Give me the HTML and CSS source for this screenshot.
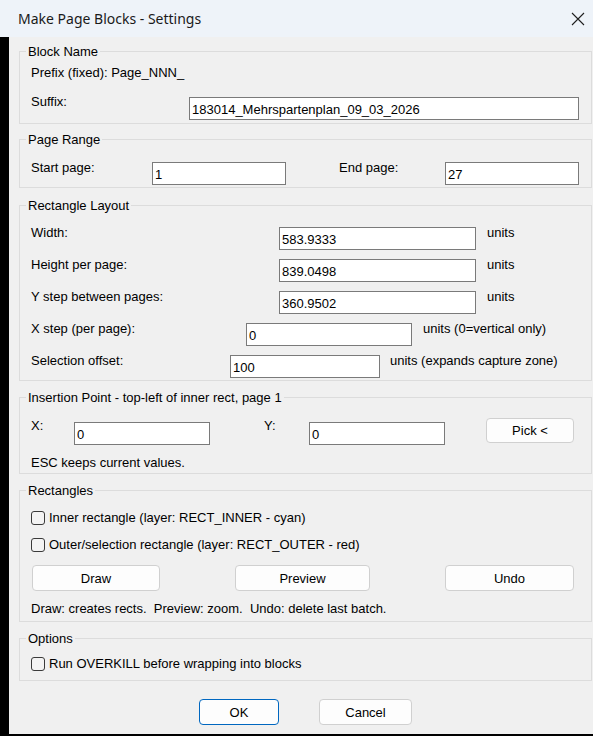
FILE: index.html
```html
<!DOCTYPE html>
<html>
<head>
<meta charset="utf-8">
<title>Make Page Blocks - Settings</title>
<link rel="stylesheet" href="styles.css">
</head>
<body>
<div class="window">
  <div class="titlebar">
    <span class="title">Make Page Blocks - Settings</span>
    <svg class="close" width="14" height="14" viewBox="0 0 14 14"><path d="M1 1 L13 13 M13 1 L1 13" stroke="#1f1f1f" stroke-width="1.1" fill="none"/></svg>
  </div>
  <div class="main">
    <div class="frame-left"></div>
    <div class="content">
      <fieldset class="gb gb-name">
        <legend>Block Name</legend>
        <div class="gb-body">
          <div class="text prefix">Prefix (fixed): Page_NNN_</div>
          <div class="row row-suffix">
            <span class="lbl w-suffix">Suffix:</span>
            <input class="tb tb-suffix" type="text" value="183014_Mehrspartenplan_09_03_2026">
          </div>
        </div>
      </fieldset>

      <fieldset class="gb gb-range">
        <legend>Page Range</legend>
        <div class="gb-body">
          <div class="row row-range">
            <span class="lbl w-start">Start page:</span>
            <input class="tb tb-page" type="text" value="1">
            <span class="lbl w-end">End page:</span>
            <input class="tb tb-page" type="text" value="27">
          </div>
        </div>
      </fieldset>

      <fieldset class="gb gb-layout">
        <legend>Rectangle Layout</legend>
        <div class="gb-body layout-rows">
          <div class="row">
            <span class="lbl w-wide">Width:</span>
            <input class="tb tb-wide" type="text" value="583.9333">
            <span class="unit">units</span>
          </div>
          <div class="row">
            <span class="lbl w-wide">Height per page:</span>
            <input class="tb tb-wide" type="text" value="839.0498">
            <span class="unit">units</span>
          </div>
          <div class="row">
            <span class="lbl w-wide">Y step between pages:</span>
            <input class="tb tb-wide" type="text" value="360.9502">
            <span class="unit">units</span>
          </div>
          <div class="row">
            <span class="lbl w-xstep">X step (per page):</span>
            <input class="tb tb-xstep" type="text" value="0">
            <span class="unit">units (0=vertical only)</span>
          </div>
          <div class="row">
            <span class="lbl w-sel">Selection offset:</span>
            <input class="tb tb-sel" type="text" value="100">
            <span class="unit unit-sel">units (expands capture zone)</span>
          </div>
        </div>
      </fieldset>

      <fieldset class="gb gb-insert">
        <legend>Insertion Point - top-left of inner rect, page 1</legend>
        <div class="gb-body">
          <div class="row row-insert">
            <span class="lbl w-x">X:</span>
            <input class="tb tb-xy" type="text" value="0">
            <span class="lbl w-y">Y:</span>
            <input class="tb tb-xy" type="text" value="0">
            <button class="btn btn-pick" type="button">Pick &lt;</button>
          </div>
          <div class="text esc">ESC keeps current values.</div>
        </div>
      </fieldset>

      <fieldset class="gb gb-rects">
        <legend>Rectangles</legend>
        <div class="gb-body">
          <div class="check check-first"><span class="cb"></span><span>Inner rectangle (layer: RECT_INNER - cyan)</span></div>
          <div class="check check-next"><span class="cb"></span><span>Outer/selection rectangle (layer: RECT_OUTER - red)</span></div>
          <div class="row row-actions">
            <button class="btn btn-draw" type="button">Draw</button>
            <button class="btn btn-preview" type="button">Preview</button>
            <button class="btn btn-undo" type="button">Undo</button>
          </div>
          <div class="text hint">Draw: creates rects.&nbsp; Preview: zoom.&nbsp; Undo: delete last batch.</div>
        </div>
      </fieldset>

      <fieldset class="gb gb-options">
        <legend>Options</legend>
        <div class="gb-body">
          <div class="check check-opt"><span class="cb"></span><span>Run OVERKILL before wrapping into blocks</span></div>
        </div>
      </fieldset>

      <div class="dialog-buttons">
        <button class="btn btn-ok" type="button">OK</button>
        <button class="btn btn-cancel" type="button">Cancel</button>
      </div>
    </div>
  </div>
  <div class="frame-bottom"></div>
</div>
</body>
</html>
```

FILE: styles.css
```css
* { box-sizing: border-box; }

html, body {
  margin: 0;
  padding: 0;
  width: 593px;
  height: 736px;
  overflow: hidden;
  background: #f0f0f0;
}

.window {
  width: 593px;
  height: 736px;
  display: flex;
  flex-direction: column;
  font-family: "Liberation Sans", Arial, sans-serif;
  font-size: 13px;
  line-height: 15px;
  color: #000;
}

.titlebar {
  height: 37px;
  flex: none;
  background: #eef3f9;
  display: flex;
  align-items: center;
  justify-content: space-between;
  padding: 0 8px 0 18px;
}

.title {
  font-family: "Noto Sans", "Open Sans", sans-serif;
  font-size: 14px;
  color: #1a1a1a;
  line-height: 20px;
}

.close { display: block; }

.main {
  flex: 1;
  display: flex;
  min-height: 0;
}

.frame-left {
  width: 9px;
  flex: none;
  background: #000;
}

.content {
  flex: 1;
  display: flex;
  flex-direction: column;
  padding: 0 1px 0 10px;
}

.frame-bottom {
  height: 2px;
  flex: none;
  background: #000;
}

/* group boxes */
.gb {
  margin: 9px 0 0 0;
  padding: 0 0 0 6px;
  border: 1px solid #dcdcdc;
  min-width: 0;
}

.gb legend {
  padding: 0 2px;
  font-size: 13px;
  line-height: 15px;
}

.gb-body { padding-left: 5px; }

.gb-name { margin-top: 7px; }
.gb-name .gb-body { padding-bottom: 3px; }
.gb-range { margin-top: 8px; }
.gb-range .gb-body { padding-bottom: 2px; }
.gb-layout { margin-top: 10px; }
.gb-layout .gb-body { padding-bottom: 2px; }
.gb-insert .gb-body { padding-bottom: 3px; }
.gb-rects .gb-body { padding-bottom: 5px; }
.gb-options .gb-body { padding-bottom: 9px; }

.text { white-space: nowrap; }
.prefix { margin-top: 6px; }

.row {
  display: flex;
  align-items: flex-start;
  white-space: nowrap;
}

.lbl { flex: none; }
.unit { flex: none; margin-left: 11px; }
.unit-sel { margin-left: 10px; }

.row-suffix { margin-top: 14px; }
.w-suffix { width: 158px; }

.row-range { margin-top: 13px; }
.w-start { width: 121px; }
.w-end { width: 106px; margin-left: 53px; }

.layout-rows {
  display: flex;
  flex-direction: column;
  gap: 7px;
  padding-top: 12px;
}
.w-wide { width: 248px; }
.w-xstep { width: 215px; }
.w-sel { width: 199px; }

.row-insert { margin-top: 13px; }
.w-x { width: 43px; }
.w-y { width: 45px; margin-left: 54px; }
.esc { margin-top: 10px; }

/* text boxes */
.tb {
  flex: none;
  height: 23px;
  margin: 3px 0 0 0;
  padding: 1px 2px 0 2px;
  border: 1px solid #7a7a7a;
  background: #fff;
  font-family: "Liberation Sans", Arial, sans-serif;
  font-size: 13px;
  color: #000;
  outline: none;
  border-radius: 0;
}
.row-range .tb { margin-top: 2px; }
.layout-rows .tb { margin-top: 2px; }
.row-insert .tb { margin-top: 4px; }

.tb-suffix { width: 390px; }
.tb-page { width: 134px; }
.tb-wide { width: 197px; }
.tb-xstep { width: 166px; }
.tb-sel { width: 150px; }
.tb-xy { width: 136px; }

/* buttons */
.btn {
  flex: none;
  height: 26px;
  padding: 0;
  border: 1px solid #d0d0d0;
  border-radius: 4px;
  background: #fdfdfd;
  font-family: "Liberation Sans", Arial, sans-serif;
  font-size: 13px;
  color: #000;
}

.btn-pick { width: 88px; height: 25px; margin-left: 41px; }

.row-actions { margin-top: 13px; }
.btn-draw { width: 128px; margin-left: 1px; }
.btn-preview { width: 135px; margin-left: 75px; }
.btn-undo { width: 129px; margin-left: 75px; }
.hint { margin-top: 10px; }

/* check boxes */
.check {
  display: flex;
  align-items: center;
  gap: 4px;
  height: 15px;
  white-space: nowrap;
}
.check-first { margin-top: 12px; }
.check-next { margin-top: 12px; }
.check-opt { margin-top: 10px; }

.cb {
  width: 14px;
  height: 14px;
  flex: none;
  border: 1px solid #3a3a3a;
  border-radius: 3px;
  background: #f3f3f3;
}

/* dialog buttons */
.dialog-buttons {
  display: flex;
  gap: 40px;
  margin-top: 18px;
  padding-left: 180px;
}
.btn-ok { width: 80px; border-color: #0067c0; }
.btn-cancel { width: 93px; }
```
